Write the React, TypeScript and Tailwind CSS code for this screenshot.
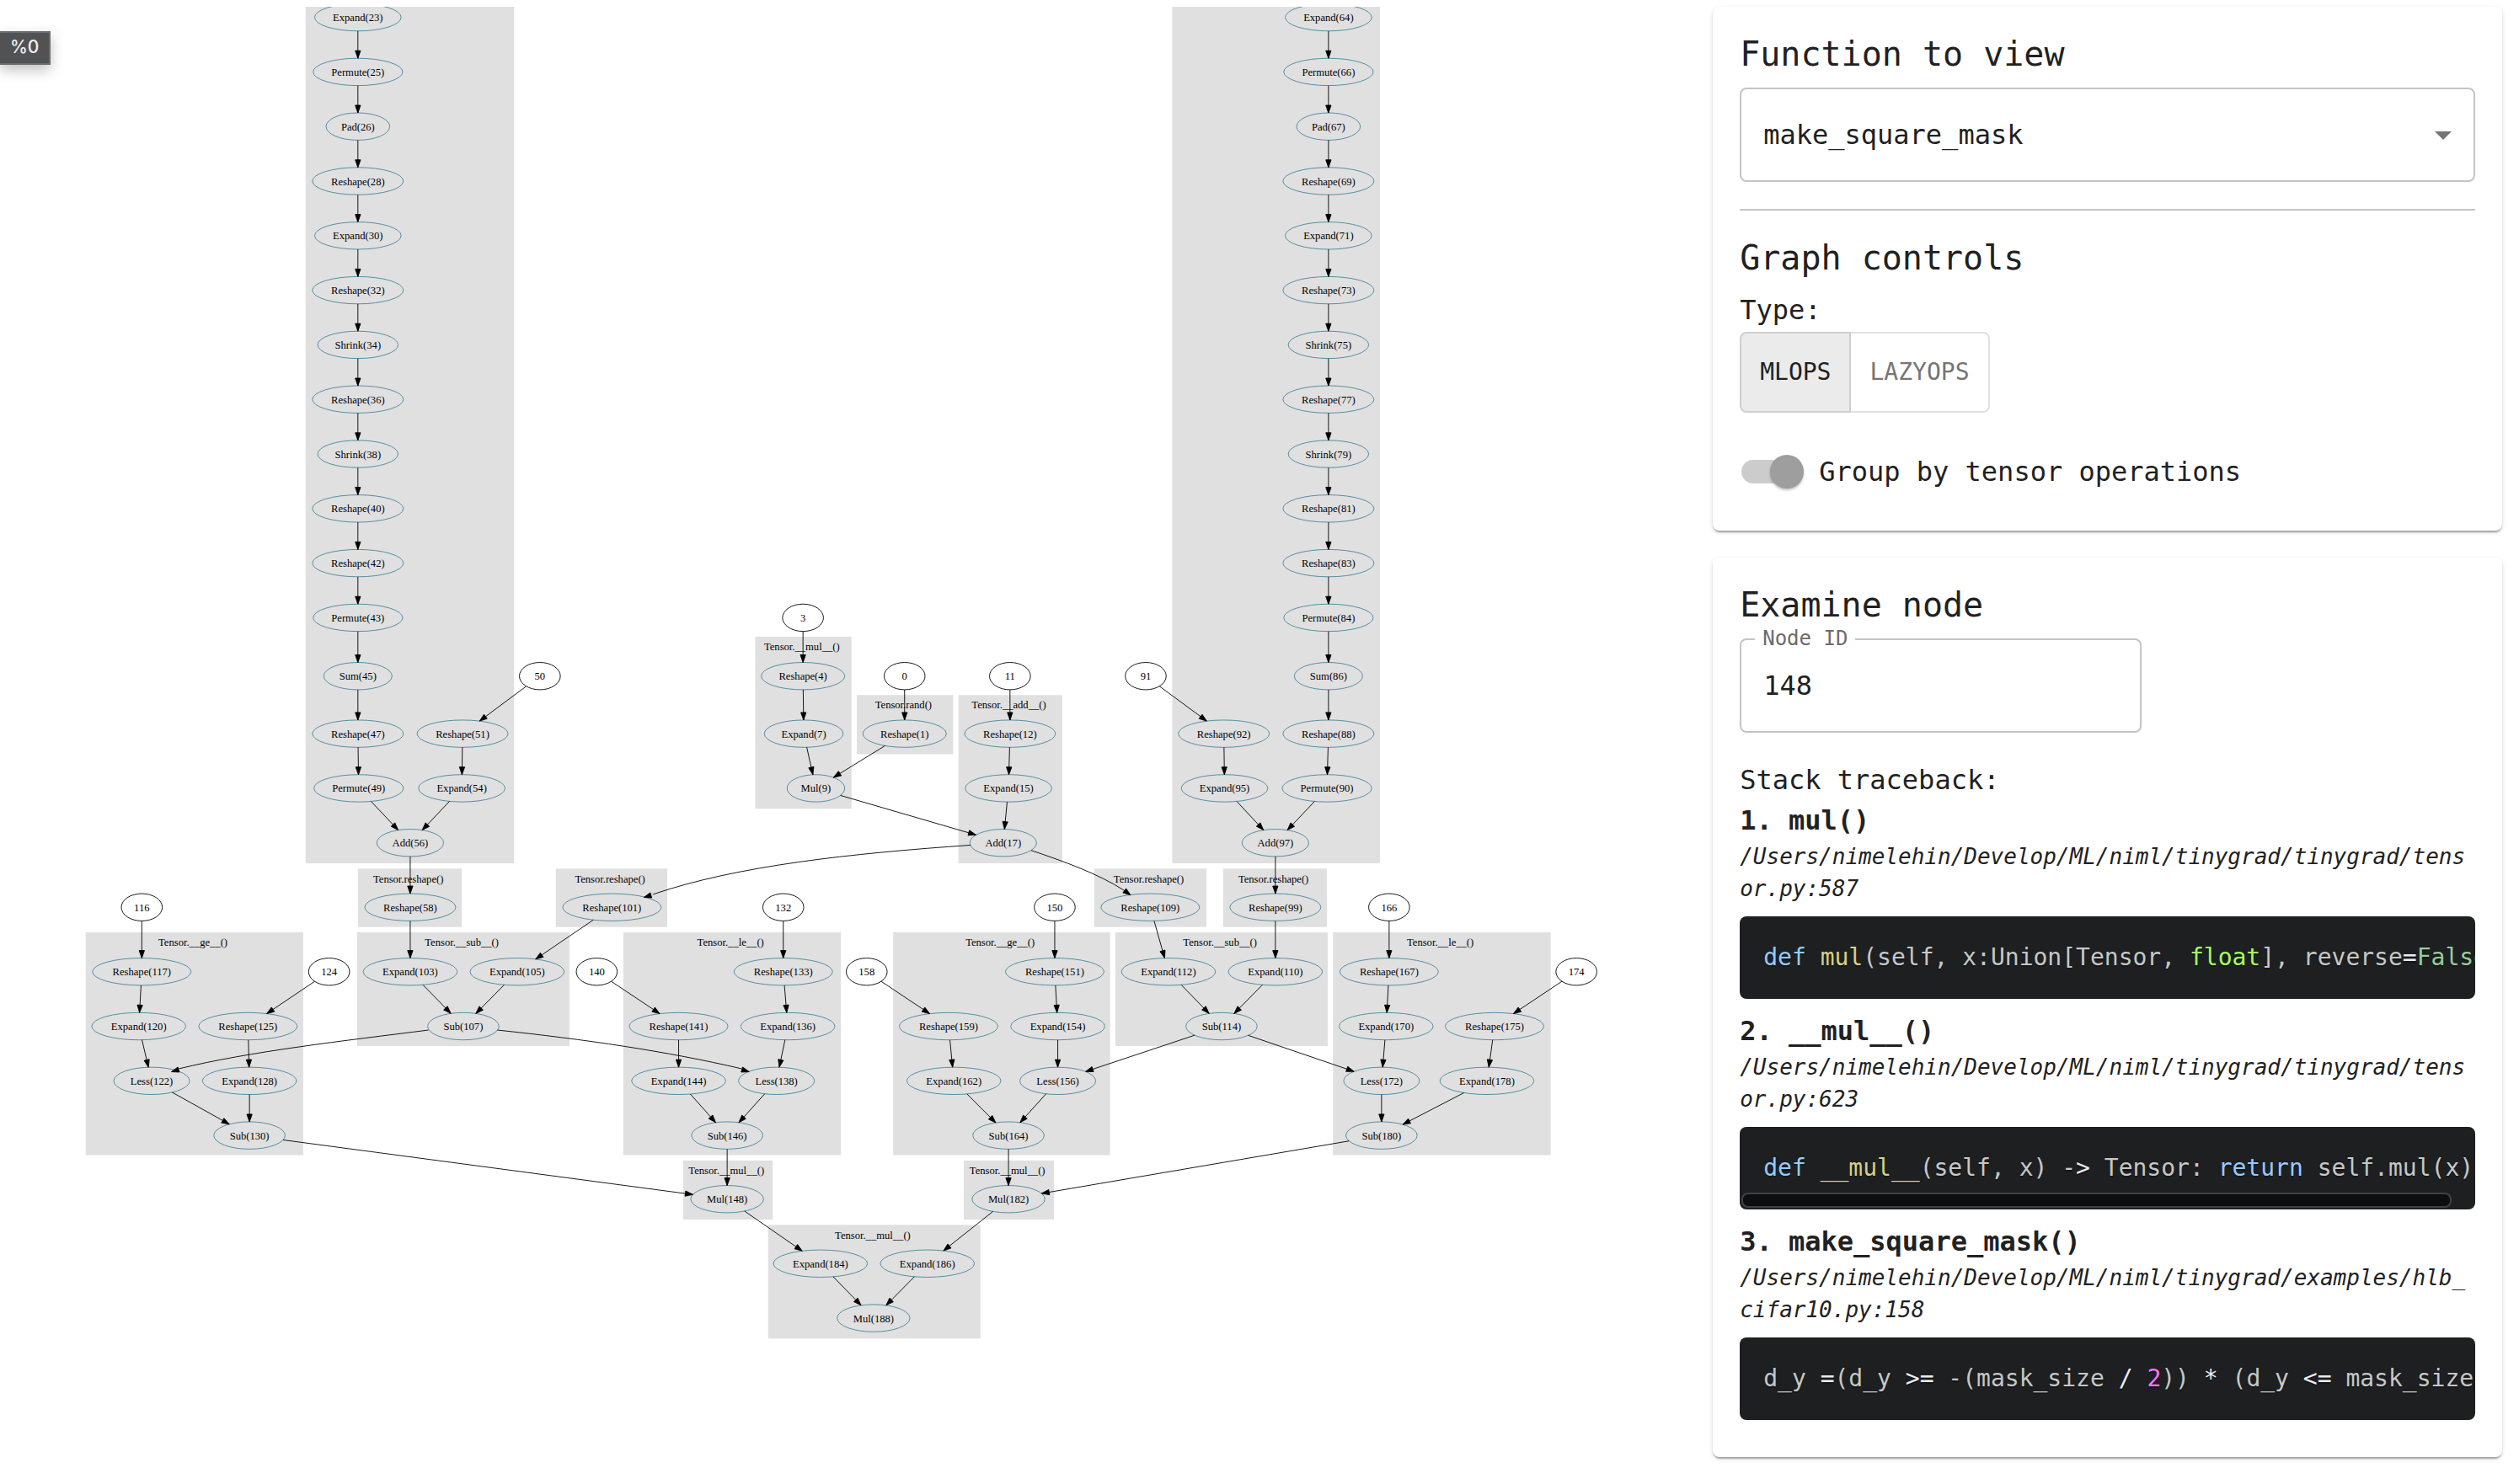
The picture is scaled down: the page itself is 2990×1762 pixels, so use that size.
import React, { useState } from "react";

type GraphNode = { id: number; op?: string; x: number; y: number };
type Cluster = { label?: string; x1: number; x2: number; y1: number; y2: number };

// Horizontal radius for an operation whose id has a single digit.
const BASE_RADIUS: Record<string, number> = {
  Reshape: 55,
  Permute: 54,
  Expand: 52,
  Shrink: 48,
  Less: 40,
  Sum: 40,
  Add: 39,
  Mul: 38,
  Sub: 37,
  Pad: 37,
};

function radius(node: GraphNode) {
  if (!node.op) return 27;
  return BASE_RADIUS[node.op] + 5 * (String(node.id).length - 1);
}

const column = (x: number, items: [string, number][]): GraphNode[] =>
  items.map(([op, id], i) => ({ op, id, x, y: 14 + 72 * i }));

const NODES: GraphNode[] = [
  ...column(472, [
    ["Expand", 23], ["Permute", 25], ["Pad", 26], ["Reshape", 28], ["Expand", 30], ["Reshape", 32],
    ["Shrink", 34], ["Reshape", 36], ["Shrink", 38], ["Reshape", 40], ["Reshape", 42], ["Permute", 43],
  ]),
  { op: "Sum", id: 45, x: 472, y: 883 },
  { op: "Reshape", id: 47, x: 472, y: 959 },
  { op: "Permute", id: 49, x: 473, y: 1031 },
  { id: 50, x: 712, y: 883 },
  { op: "Reshape", id: 51, x: 610, y: 959 },
  { op: "Expand", id: 54, x: 609, y: 1031 },
  { op: "Add", id: 56, x: 541, y: 1103 },
  { op: "Reshape", id: 58, x: 541, y: 1188 },
  ...column(1752, [
    ["Expand", 64], ["Permute", 66], ["Pad", 67], ["Reshape", 69], ["Expand", 71], ["Reshape", 73],
    ["Shrink", 75], ["Reshape", 77], ["Shrink", 79], ["Reshape", 81], ["Reshape", 83], ["Permute", 84],
  ]),
  { op: "Sum", id: 86, x: 1752, y: 883 },
  { op: "Reshape", id: 88, x: 1752, y: 959 },
  { op: "Permute", id: 90, x: 1750, y: 1031 },
  { id: 91, x: 1511, y: 883 },
  { op: "Reshape", id: 92, x: 1614, y: 959 },
  { op: "Expand", id: 95, x: 1615, y: 1031 },
  { op: "Add", id: 97, x: 1682, y: 1103 },
  { op: "Reshape", id: 99, x: 1682, y: 1188 },
  { id: 3, x: 1059, y: 806 },
  { op: "Reshape", id: 4, x: 1059, y: 883 },
  { op: "Expand", id: 7, x: 1060, y: 959 },
  { op: "Mul", id: 9, x: 1076, y: 1031 },
  { id: 0, x: 1193, y: 883 },
  { op: "Reshape", id: 1, x: 1193, y: 959 },
  { id: 11, x: 1332, y: 883 },
  { op: "Reshape", id: 12, x: 1332, y: 959 },
  { op: "Expand", id: 15, x: 1330, y: 1031 },
  { op: "Add", id: 17, x: 1323, y: 1103 },
  { op: "Reshape", id: 101, x: 807, y: 1188 },
  { op: "Reshape", id: 109, x: 1517, y: 1188 },
  { id: 116, x: 187, y: 1188 },
  { op: "Reshape", id: 117, x: 187, y: 1273 },
  { op: "Expand", id: 120, x: 183, y: 1345 },
  { op: "Less", id: 122, x: 200, y: 1417 },
  { id: 124, x: 434, y: 1273 },
  { op: "Reshape", id: 125, x: 327, y: 1345 },
  { op: "Expand", id: 128, x: 329, y: 1417 },
  { op: "Sub", id: 130, x: 329, y: 1489 },
  { op: "Expand", id: 103, x: 541, y: 1273 },
  { op: "Expand", id: 105, x: 682, y: 1273 },
  { op: "Sub", id: 107, x: 611, y: 1345 },
  { id: 132, x: 1033, y: 1188 },
  { op: "Reshape", id: 133, x: 1033, y: 1273 },
  { op: "Expand", id: 136, x: 1039, y: 1345 },
  { op: "Less", id: 138, x: 1024, y: 1417 },
  { id: 140, x: 787, y: 1273 },
  { op: "Reshape", id: 141, x: 895, y: 1345 },
  { op: "Expand", id: 144, x: 895, y: 1417 },
  { op: "Sub", id: 146, x: 959, y: 1489 },
  { op: "Mul", id: 148, x: 959, y: 1573 },
  { id: 150, x: 1391, y: 1188 },
  { op: "Reshape", id: 151, x: 1391, y: 1273 },
  { op: "Expand", id: 154, x: 1395, y: 1345 },
  { op: "Less", id: 156, x: 1395, y: 1417 },
  { id: 158, x: 1143, y: 1273 },
  { op: "Reshape", id: 159, x: 1251, y: 1345 },
  { op: "Expand", id: 162, x: 1258, y: 1417 },
  { op: "Sub", id: 164, x: 1330, y: 1489 },
  { op: "Expand", id: 112, x: 1541, y: 1273 },
  { op: "Expand", id: 110, x: 1682, y: 1273 },
  { op: "Sub", id: 114, x: 1611, y: 1345 },
  { id: 166, x: 1832, y: 1188 },
  { op: "Reshape", id: 167, x: 1832, y: 1273 },
  { op: "Expand", id: 170, x: 1828, y: 1345 },
  { op: "Less", id: 172, x: 1822, y: 1417 },
  { id: 174, x: 2079, y: 1273 },
  { op: "Reshape", id: 175, x: 1971, y: 1345 },
  { op: "Expand", id: 178, x: 1961, y: 1417 },
  { op: "Sub", id: 180, x: 1822, y: 1489 },
  { op: "Mul", id: 182, x: 1330, y: 1573 },
  { op: "Expand", id: 184, x: 1082, y: 1658 },
  { op: "Expand", id: 186, x: 1223, y: 1658 },
  { op: "Mul", id: 188, x: 1152, y: 1730 },
];

const BY_ID = new Map(NODES.map((n) => [n.id, n]));

// Each chain is a run of node ids joined by arrows.
const CHAINS: number[][] = [
  [23, 25, 26, 28, 30, 32, 34, 36, 38, 40, 42, 43, 45, 47, 49, 56, 58, 103, 107],
  [50, 51, 54, 56],
  [64, 66, 67, 69, 71, 73, 75, 77, 79, 81, 83, 84, 86, 88, 90, 97, 99, 110, 114],
  [91, 92, 95, 97],
  [3, 4, 7, 9, 17],
  [0, 1, 9],
  [11, 12, 15, 17],
  [101, 105, 107],
  [109, 112, 114, 156, 164, 182, 186, 188],
  [114, 172, 180, 182],
  [116, 117, 120, 122, 130, 148, 184, 188],
  [124, 125, 128, 130],
  [132, 133, 136, 138, 146, 148],
  [140, 141, 144, 146],
  [150, 151, 154, 156],
  [158, 159, 162, 164],
  [166, 167, 170, 172],
  [174, 175, 178, 180],
];

const CURVES = [
  { d: "M1280 1106C1122 1117 972 1133 861 1171", base: [859, 1172], tip: [849, 1175] },
  { d: "M1360 1113C1402 1127 1449 1144 1483 1166", base: [1483, 1166], tip: [1491, 1172] },
  { d: "M565 1350C455 1364 330 1378 236 1401", base: [236, 1402], tip: [226, 1405] },
  { d: "M656 1350C770 1362 880 1378 978 1401", base: [978, 1402], tip: [988, 1405] },
];

const CLUSTERS: Cluster[] = [
  { x1: 403, x2: 678, y1: -40, y2: 1130 },
  { x1: 1546, x2: 1820, y1: -40, y2: 1130 },
  { label: "Tensor.__mul__()", x1: 996, x2: 1123, y1: 831, y2: 1058 },
  { label: "Tensor.rand()", x1: 1130, x2: 1257, y1: 908, y2: 986 },
  { label: "Tensor.__add__()", x1: 1264, x2: 1401, y1: 908, y2: 1130 },
  { label: "Tensor.reshape()", x1: 472, x2: 609, y1: 1137, y2: 1214 },
  { label: "Tensor.reshape()", x1: 733, x2: 880, y1: 1137, y2: 1214 },
  { label: "Tensor.reshape()", x1: 1443, x2: 1591, y1: 1137, y2: 1214 },
  { label: "Tensor.reshape()", x1: 1613, x2: 1750, y1: 1137, y2: 1214 },
  { label: "Tensor.__ge__()", x1: 113, x2: 400, y1: 1221, y2: 1515 },
  { label: "Tensor.__sub__()", x1: 471, x2: 751, y1: 1221, y2: 1371 },
  { label: "Tensor.__le__()", x1: 822, x2: 1109, y1: 1221, y2: 1515 },
  { label: "Tensor.__ge__()", x1: 1178, x2: 1464, y1: 1221, y2: 1515 },
  { label: "Tensor.__sub__()", x1: 1471, x2: 1751, y1: 1221, y2: 1371 },
  { label: "Tensor.__le__()", x1: 1758, x2: 2045, y1: 1221, y2: 1515 },
  { label: "Tensor.__mul__()", x1: 901, x2: 1019, y1: 1522, y2: 1600 },
  { label: "Tensor.__mul__()", x1: 1271, x2: 1390, y1: 1522, y2: 1600 },
  { label: "Tensor.__mul__()", x1: 1013, x2: 1293, y1: 1607, y2: 1757 },
];

// Point where the line from a node's centre towards (tx, ty) leaves its ellipse.
function boundary(node: GraphNode, tx: number, ty: number) {
  const dx = tx - node.x;
  const dy = ty - node.y;
  const t = 1 / Math.hypot(dx / radius(node), dy / 18);
  return [node.x + dx * t, node.y + dy * t];
}

function ArrowHead({ from, tip }: { from: number[]; tip: number[] }) {
  const len = Math.hypot(tip[0] - from[0], tip[1] - from[1]);
  const ux = (tip[0] - from[0]) / len;
  const uy = (tip[1] - from[1]) / len;
  const bx = tip[0] - ux * 10;
  const by = tip[1] - uy * 10;
  const points = [
    [bx - uy * 3.5, by + ux * 3.5],
    tip,
    [bx + uy * 3.5, by - ux * 3.5],
  ];
  return <polygon points={points.map((p) => p.join(",")).join(" ")} className="fill-black stroke-black" />;
}

function StraightEdge({ a, b }: { a: GraphNode; b: GraphNode }) {
  const start = boundary(a, b.x, b.y);
  const end = boundary(b, a.x, a.y);
  return (
    <g>
      <line x1={start[0]} y1={start[1]} x2={end[0]} y2={end[1]} className="stroke-black" />
      <ArrowHead from={start} tip={end} />
    </g>
  );
}

function Graph() {
  return (
    <svg
      viewBox="0 0 2259 1940"
      className="block h-auto w-full font-['Liberation_Serif',serif] text-[14px]"
      role="img"
      aria-label="Operation graph"
    >
      {CLUSTERS.map((c, i) => (
        <g key={i}>
          <rect x={c.x1} y={c.y1} width={c.x2 - c.x1} height={c.y2 - c.y1} className="fill-[#e0e0e0]" />
          {c.label && (
            <text x={(c.x1 + c.x2) / 2 - 2} y={c.y1 + 18} textAnchor="middle">
              {c.label}
            </text>
          )}
        </g>
      ))}
      {NODES.map((n) => (
        <g key={n.id}>
          <ellipse
            cx={n.x}
            cy={n.y}
            rx={radius(n)}
            ry={18}
            className={n.op ? "fill-none stroke-[#468499]" : "fill-none stroke-black"}
          />
          <text x={n.x} y={n.y + 5} textAnchor="middle">
            {n.op ? `${n.op}(${n.id})` : n.id}
          </text>
        </g>
      ))}
      {CHAINS.flatMap((chain) =>
        chain.slice(1).map((id, i) => (
          <StraightEdge key={`${chain[i]}-${id}`} a={BY_ID.get(chain[i])!} b={BY_ID.get(id)!} />
        )),
      )}
      {CURVES.map((c) => (
        <g key={c.d}>
          <path d={c.d} className="fill-none stroke-black" />
          <ArrowHead from={c.base} tip={c.tip} />
        </g>
      ))}
    </svg>
  );
}

function Card({ children, className }: { children: React.ReactNode; className: string }) {
  return (
    <section
      className={`rounded-lg bg-white px-8 pt-6 shadow-[0_4px_2px_-2px_rgba(0,0,0,0.2),0_2px_2px_0_rgba(0,0,0,0.14),0_2px_6px_0_rgba(0,0,0,0.12)] ${className}`}
    >
      {children}
    </section>
  );
}

const Kw = ({ children }: { children: string }) => <span className="text-[#96cbfe]">{children}</span>;
const Fn = ({ children }: { children: string }) => <span className="text-[#dad085]">{children}</span>;
const Op = ({ children }: { children: string }) => <span className="text-[#ededed]">{children}</span>;

const TRACE: { name: string; path: string; code: React.ReactNode; scrollbar?: boolean }[] = [
  {
    name: "mul()",
    path: "/Users/nimelehin/Develop/ML/niml/tinygrad/tinygrad/tensor.py:587",
    code: (
      <>
        <Kw>def</Kw> <Fn>mul</Fn>(self, x:Union[Tensor, <span className="text-[#a8ff60]">float</span>], reverse
        <Op>=</Op>
        <span className="text-[#99cc99]">False</span>
      </>
    ),
  },
  {
    name: "__mul__()",
    path: "/Users/nimelehin/Develop/ML/niml/tinygrad/tinygrad/tensor.py:623",
    scrollbar: true,
    code: (
      <>
        <Kw>def</Kw> <Fn>__mul__</Fn>(self, x) -<Op>&gt;</Op> Tensor: <Kw>return</Kw> self.mul(x)
      </>
    ),
  },
  {
    name: "make_square_mask()",
    path: "/Users/nimelehin/Develop/ML/niml/tinygrad/examples/hlb_cifar10.py:158",
    code: (
      <>
        d_y <Op>=</Op>(d_y <Op>&gt;=</Op> -(mask_size <Op>/</Op> <span className="text-[#ff73fd]">2</span>)) <Op>*</Op> (d_y{" "}
        <Op>&lt;=</Op> mask_size
      </>
    ),
  },
];

export default function App() {
  const [fn, setFn] = useState("make_square_mask");
  const [type, setType] = useState("MLOPS");
  const [grouped, setGrouped] = useState(true);
  const [nodeId, setNodeId] = useState("148");

  return (
    <div className="relative grid grid-cols-[17fr_8fr] items-start bg-white pt-2 font-['DejaVu_Sans_Mono',monospace] text-[#212121]">
      <main>
        <Graph />
      </main>
      <div
        role="tooltip"
        className="absolute top-[37px] left-0 flex h-10 items-center border-2 border-l-0 border-[#6c6c6c] bg-[#515254] px-3 pb-0.5 font-['Inter',sans-serif] text-[21px] font-medium text-[#f0f0f0] shadow-[0_6px_16px_rgba(0,0,0,0.25)]"
      >
        %0
      </div>

      <aside className="flex min-w-0 flex-col gap-8 pr-5">
        <Card className="pb-8">
          <label htmlFor="function" className="block text-[40px] leading-[64px]">
            Function to view
          </label>
          <div className="relative mt-2">
            <select
              id="function"
              value={fn}
              onChange={(e) => setFn(e.target.value)}
              className="h-28 w-full appearance-none rounded-lg border-2 border-[#c4c4c4] bg-white px-[26px] text-[32px]"
            >
              <option>make_square_mask</option>
            </select>
            <svg viewBox="0 0 20 10" className="pointer-events-none absolute top-[52px] right-7 h-2.5 w-5 fill-[#757575]">
              <path d="M0 0h20L10 10z" />
            </svg>
          </div>
          <hr className="mt-8 border-t-2 border-[#c4c4c4]" />
          <h2 className="mt-6 text-[40px] leading-[64px]">Graph controls</h2>
          <p id="type-label" className="mt-1.5 mb-0.5 text-[32px] leading-[48px]">
            Type:
          </p>
          <div role="group" aria-labelledby="type-label" className="flex">
            {["MLOPS", "LAZYOPS"].map((t) => (
              <button
                key={t}
                type="button"
                aria-pressed={type === t}
                onClick={() => setType(t)}
                className="h-24 border-2 border-[#e0e0e0] px-[22px] text-[28px] text-[#757575] first:rounded-l-lg last:rounded-r-lg last:border-l-0 aria-pressed:border-[#cfcfcf] aria-pressed:bg-[#ebebeb] aria-pressed:text-[#212121]"
              >
                {t}
              </button>
            ))}
          </div>
          <label className="mt-8 flex h-[76px] items-center gap-[18px] pl-0.5 text-[32px]">
            <input
              type="checkbox"
              role="switch"
              checked={grouped}
              onChange={(e) => setGrouped(e.target.checked)}
              className="peer sr-only"
            />
            <span className="flex h-7 w-[74px] items-center rounded-full bg-linear-to-r from-[#cccccc] from-90% to-transparent to-90% peer-checked:justify-end">
              <span className="size-10 rounded-full bg-[#9e9e9e] shadow-[0_2px_3px_rgba(0,0,0,0.25)]" />
            </span>
            Group by tensor operations
          </label>
        </Card>

        <Card className="pb-11">
          <h2 className="text-[40px] leading-[64px]">Examine node</h2>
          <div className="relative mt-2 w-[477px] max-w-full">
            <label htmlFor="node-id" className="absolute -top-4 left-[18px] bg-white px-[9px] text-2xl text-[#6b6b6b]">
              Node ID
            </label>
            <input
              id="node-id"
              type="text"
              value={nodeId}
              onChange={(e) => setNodeId(e.target.value)}
              className="block h-28 w-full rounded-lg border-2 border-[#c4c4c4] px-[26px] text-[32px]"
            />
          </div>
          <p className="mt-8 text-[32px] leading-[48px]">Stack traceback:</p>
          <ol className="flex flex-col gap-3.5">
            {TRACE.map((t, i) => (
              <li key={t.name}>
                <h3 className="text-[32px] leading-[48px] font-bold">
                  {i + 1}. {t.name}
                </h3>
                <p className="text-[26px] leading-[38px] break-all italic">{t.path}</p>
                <div className="relative mt-3.5 overflow-hidden rounded-lg bg-[#1d1f21] text-[#c5c8c6]">
                  <pre className="overflow-hidden px-7 py-7 font-['DejaVu_Sans_Mono',monospace] text-[28px] leading-[42px] [text-shadow:0_2px_rgba(0,0,0,0.3)]">
                    <code className="font-['DejaVu_Sans_Mono',monospace]">{t.code}</code>
                  </pre>
                  {t.scrollbar && (
                    <div className="absolute bottom-0.5 left-0.5 h-[18px] w-[843px] max-w-full rounded-lg border-2 border-[#3f4143] bg-[#0d0e10]" />
                  )}
                </div>
              </li>
            ))}
          </ol>
        </Card>
      </aside>
    </div>
  );
}
